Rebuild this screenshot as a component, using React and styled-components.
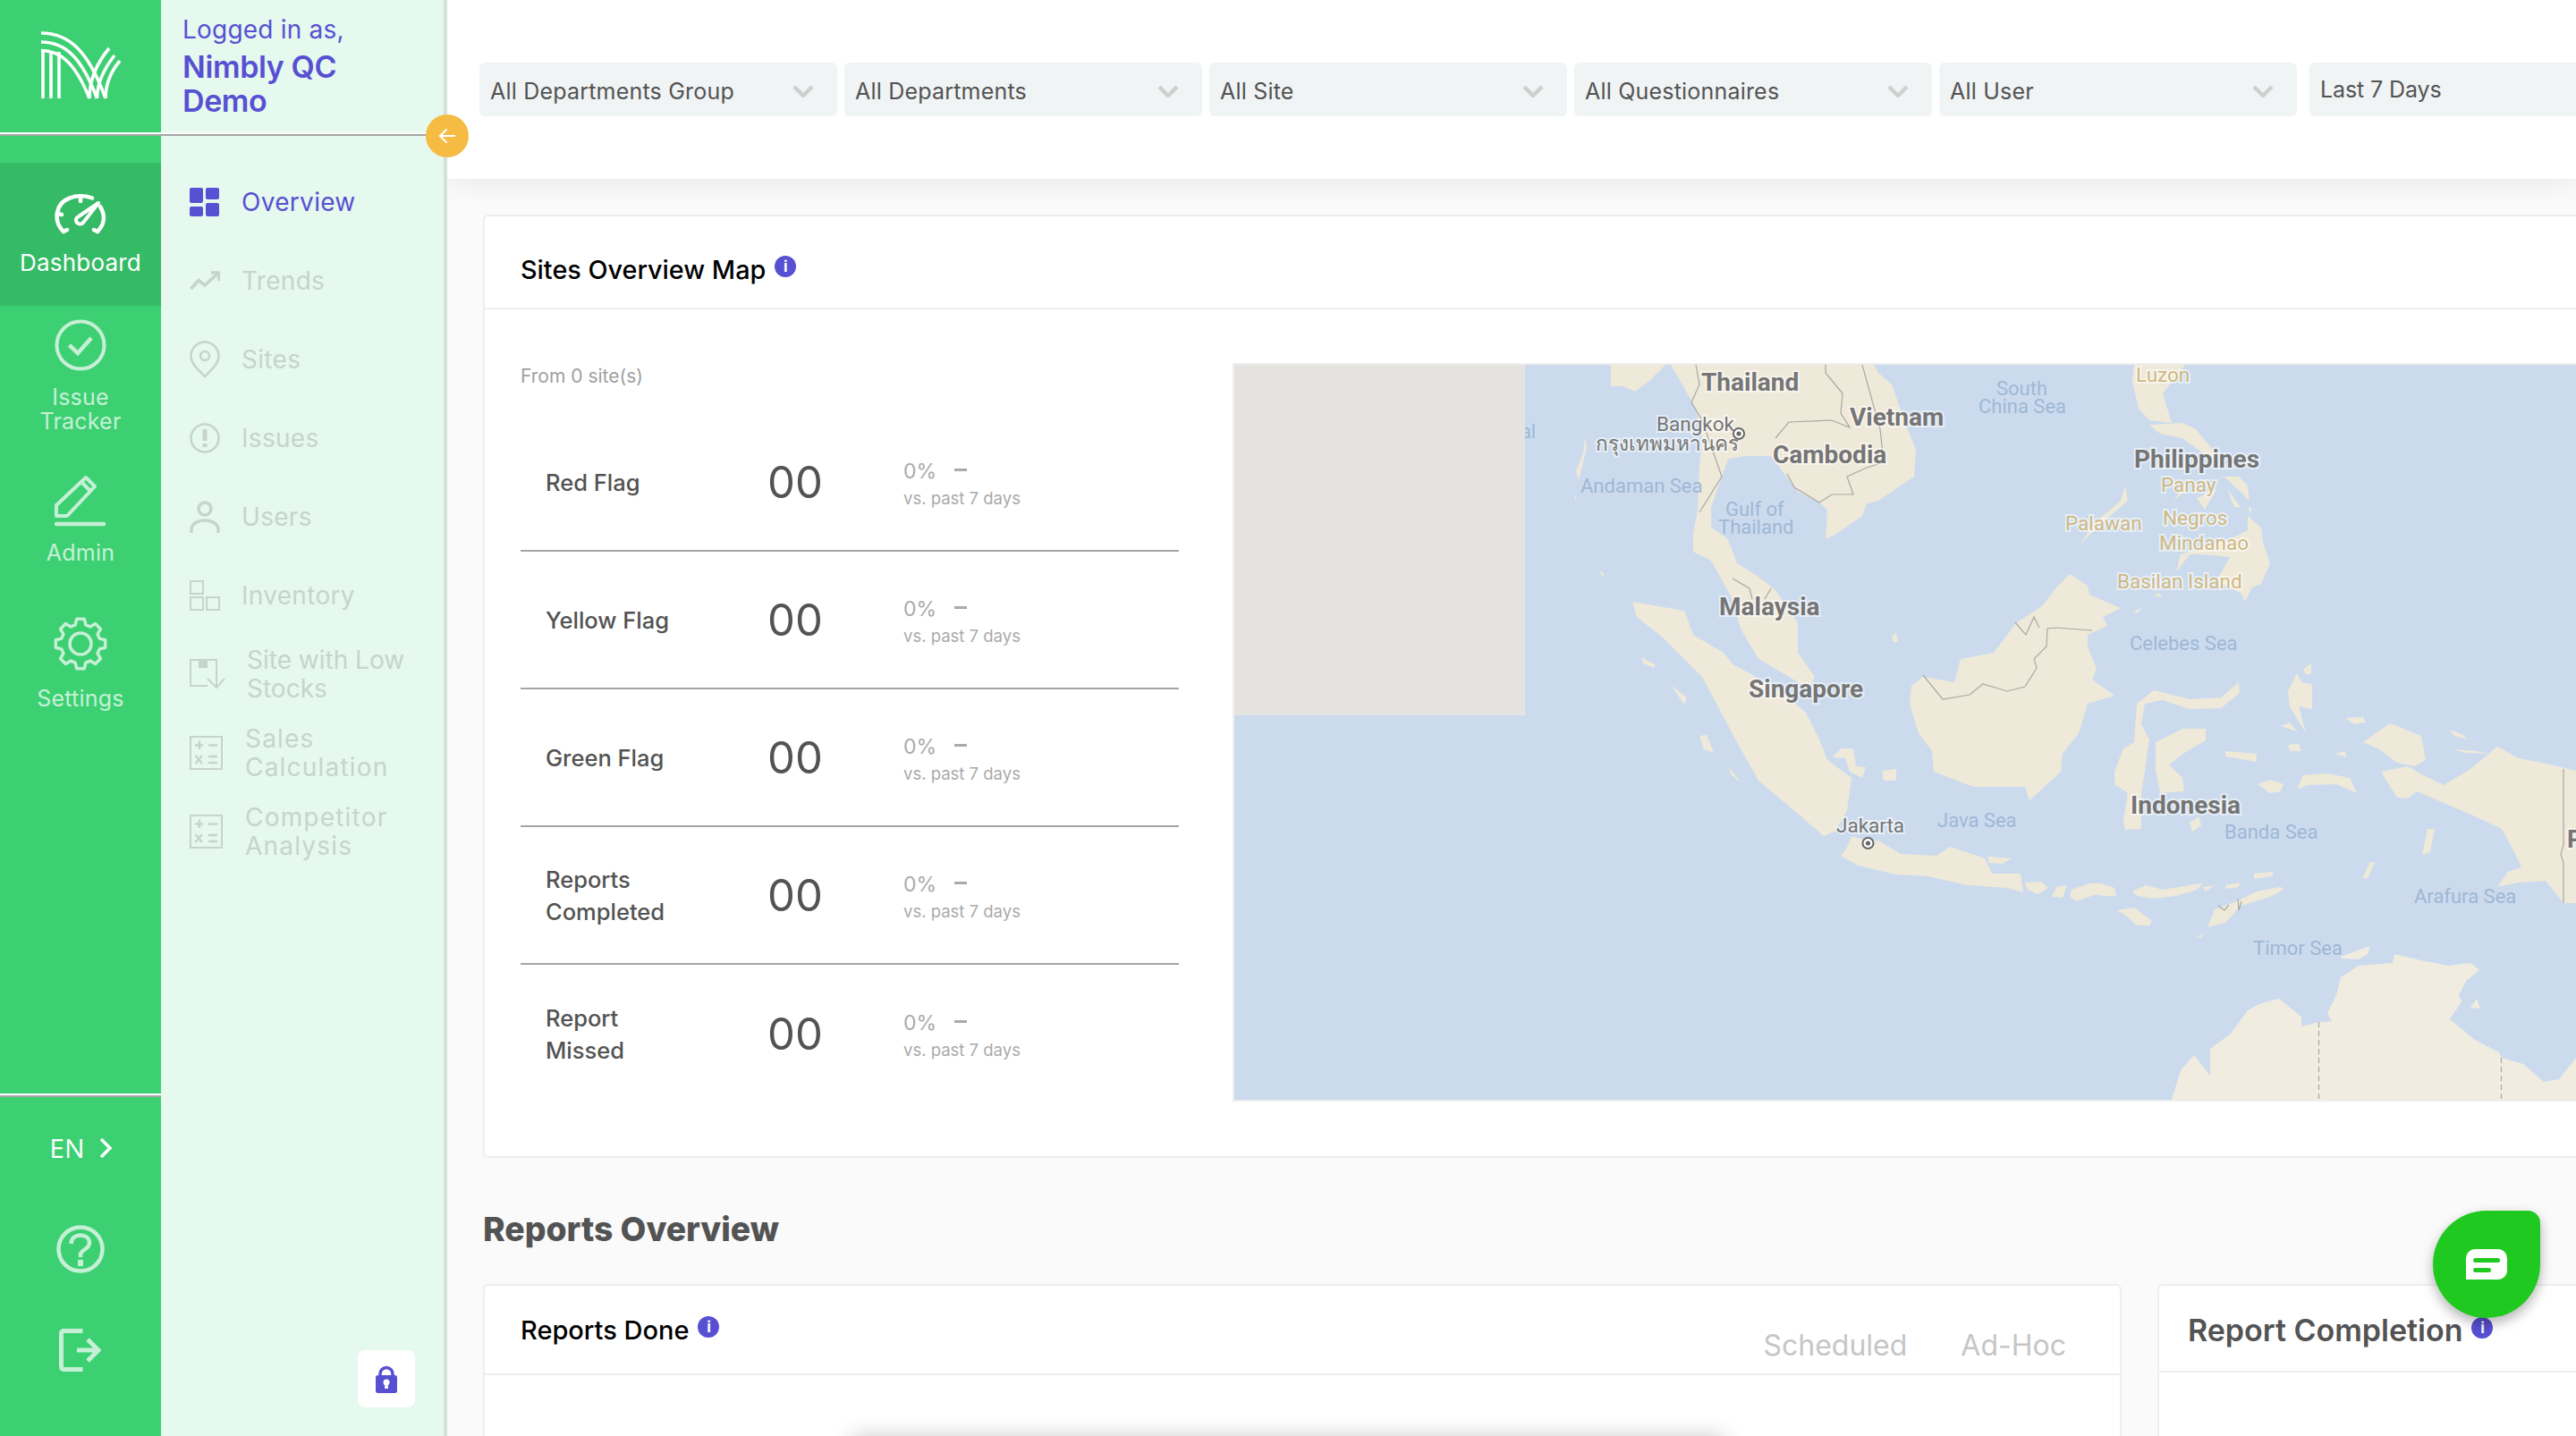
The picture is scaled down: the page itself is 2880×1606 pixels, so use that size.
import React from 'react';
import styled, { createGlobalStyle } from 'styled-components';

const GREEN = '#3CD072';
const PURPLE = '#5750D2';
const MUTED = '#C7D4CD';
const RAIL_ICON = '#C6F0D6';
const TEXT = '#535353';

const GlobalStyle = createGlobalStyle`
  html, body { margin: 0; padding: 0; background: #fafafa; }
  body { font-family: Inter, "Noto Sans", sans-serif; overflow: hidden; }
  * { box-sizing: border-box; }
`;

const Page = styled.div`
  position: relative;
  display: flex;
  width: 100vw;
  height: 100vh;
  overflow: hidden;
`;

const Rail = styled.aside`
  flex: 0 0 180px;
  display: flex;
  flex-direction: column;
  background: ${GREEN};
`;

const LogoBox = styled.div`
  height: 148px;
  display: flex;
  padding: 35px 0 0 46px;
`;

const Rule = styled.div`
  height: 4px;
  border-top: 2px solid #fff;
  border-bottom: 2px solid #a3a8a5;
  flex: none;
`;

const RailNav = styled.nav`
  margin-top: 30px;
  display: flex;
  flex-direction: column;
`;

const RailItem = styled.div`
  height: ${p => p.$height}px;
  padding-top: ${p => p.$top}px;
  display: flex;
  flex-direction: column;
  align-items: center;
  gap: ${p => p.$gap}px;
  background: ${p => (p.$active ? '#35BA66' : 'transparent')};
  color: ${p => (p.$active ? '#fff' : RAIL_ICON)};
  svg { display: block; flex: none; }
`;

const RailLabel = styled.span`
  font-size: ${p => (p.$active ? 26 : 25)}px;
  line-height: ${p => p.$line || 30}px;
  text-align: center;
  letter-spacing: 0.2px;
`;

const RailFoot = styled.div`
  margin-top: auto;
  padding-bottom: 40px;
`;

const FootRow = styled.div`
  height: 113px;
  display: flex;
  align-items: center;
  justify-content: center;
  gap: 16px;
  color: ${p => (p.$soft ? RAIL_ICON : '#fff')};
`;

const LangText = styled.span`
  font-family: "Open Sans", sans-serif;
  font-size: 30px;
`;

const Panel = styled.aside`
  flex: 0 0 320px;
  display: flex;
  flex-direction: column;
  background: #E5F9EE;
  border-right: 4px solid #D2E1D9;
`;

const Who = styled.div`
  height: 148px;
  padding: 14px 0 0 24px;
  color: ${PURPLE};
  font-size: 28px;
  line-height: 38px;
  letter-spacing: 0.2px;
`;

const WhoName = styled.div`
  margin-top: 4px;
  font-size: 34px;
  font-weight: 600;
  letter-spacing: -0.4px;
`;

const PanelNav = styled.nav`
  margin-top: 30px;
  display: flex;
  flex-direction: column;
`;

const PanelItem = styled.div`
  height: 88px;
  padding-left: 32px;
  display: flex;
  align-items: center;
  color: ${p => (p.$active ? PURPLE : MUTED)};
`;

const PanelIcon = styled.span`
  flex: 0 0 40px;
  display: flex;
`;

const PanelText = styled.span`
  margin-left: ${p => p.$indent || 18}px;
  font-size: 28px;
  line-height: 32px;
  letter-spacing: ${p => p.$spacing ?? 0.3}px;
`;

const LockButton = styled.div`
  margin: auto 32px 32px 0;
  align-self: flex-end;
  width: 64px;
  height: 64px;
  background: #fff;
  border-radius: 8px;
  display: flex;
  align-items: center;
  justify-content: center;
`;

const Toggle = styled.div`
  position: absolute;
  z-index: 3;
  left: 476px;
  top: 128px;
  width: 48px;
  height: 48px;
  border-radius: 50%;
  background: #F6BB43;
  display: flex;
  align-items: center;
  justify-content: center;
`;

const Main = styled.main`
  flex: 1;
  min-width: 0;
  display: flex;
  flex-direction: column;
  overflow: hidden;
  background: #fafafa;
`;

const FilterBar = styled.div`
  flex: none;
  height: 200px;
  padding: 70px 0 0 36px;
  display: flex;
  align-items: flex-start;
  gap: 8px;
  background: #fff;
  box-shadow: 0 0 34px rgba(0, 0, 0, 0.09);
  position: relative;
`;

const Select = styled.div`
  flex: 0 0 400px;
  height: 60px;
  padding: 3px 26px 0 12px;
  display: flex;
  align-items: center;
  justify-content: space-between;
  background: #F1F4F5;
  border-radius: 6px;
  font-size: 25px;
  color: ${TEXT};
  letter-spacing: 0.2px;
`;

const DateRange = styled(Select)`
  margin-left: 6px;
  padding-top: 0;
  padding-left: 12px;
  letter-spacing: -0.1px;
`;

const Content = styled.div`
  padding: 40px 0 0 40px;
  display: flex;
  flex-direction: column;
`;

const Card = styled.section`
  flex: none;
  width: ${p => p.$width}px;
  background: #fff;
  border: 2px solid #eeeeee;
  border-radius: 6px;
`;

const CardHead = styled.header`
  height: ${p => p.$height}px;
  padding: ${p => p.$drop || 0}px ${p => p.$right || 0}px 0 ${p => p.$left || 40}px;
  display: flex;
  align-items: center;
  border-bottom: 2px solid #eeeeee;
`;

const CardTitle = styled.h3`
  margin: 0;
  font-size: ${p => p.$size || 29}px;
  font-weight: ${p => p.$weight || 500};
  color: ${p => p.$color || '#000'};
`;

const Info = styled.span`
  width: 24px;
  height: 24px;
  margin: -6px 0 0 10px;
  border-radius: 50%;
  background: ${PURPLE};
  color: #fff;
  font-size: 17px;
  font-weight: 700;
  line-height: 24px;
  text-align: center;
`;

const MapBody = styled.div`
  display: flex;
  gap: 60px;
  padding: 60px 0 60px 40px;
`;

const Stats = styled.div`
  flex: 0 0 736px;
`;

const FromText = styled.div`
  height: 57px;
  padding-top: 1px;
  font-size: 21px;
  line-height: 28px;
  color: #a0a0a0;
`;

const StatRow = styled.div`
  height: 154px;
  padding-left: 28px;
  display: flex;
  align-items: center;
  border-bottom: ${p => (p.$last ? 'none' : '2px solid #a3a6a8')};
`;

const StatLabel = styled.div`
  flex: 0 0 248px;
  padding-top: 2px;
  font-size: 25.5px;
  line-height: 36px;
  font-weight: 500;
  color: ${TEXT};
`;

const StatValue = styled.div`
  flex: 0 0 152px;
  font-size: 49px;
  color: ${TEXT};
`;

const StatTrend = styled.div`
  color: #aaaaaa;
  margin-top: 2px;
`;

const TrendTop = styled.div`
  display: flex;
  align-items: center;
  gap: 20px;
  font-size: 23px;
  line-height: 30px;
`;

const TrendDash = styled.span`
  width: 14px;
  height: 3px;
  margin-top: -3px;
  background: #aaaaaa;
`;

const TrendNote = styled.div`
  margin-top: 3px;
  font-size: 18.5px;
  line-height: 24px;
`;

const MapFrame = styled.div`
  flex: none;
  width: 1540px;
  height: 826px;
  border: 2px solid #eeeeee;
  background: #CBDBED;
  svg { display: block; }
`;

const SectionTitle = styled.h2`
  margin: 56px 0 0;
  height: 85px;
  font-size: 37.3px;
  line-height: 48px;
  font-weight: 800;
  color: ${TEXT};
`;

const ReportRow = styled.div`
  display: flex;
  gap: 40px;
`;

const Tabs = styled.div`
  margin-left: auto;
  display: flex;
  gap: 60px;
  padding-top: 34px;
  font-size: 32px;
  color: #c6c6c6;
`;

const ChartShadow = styled.div`
  width: 976px;
  height: 60px;
  margin: 68px 0 0 410px;
  background: #fff;
  box-shadow: 0 0 24px rgba(0, 0, 0, 0.2);
`;

const ChatButton = styled.div`
  position: absolute;
  z-index: 3;
  left: 2720px;
  top: 1354px;
  width: 120px;
  height: 120px;
  border-radius: 60px 14px 60px 60px;
  background: #1FC91F;
  box-shadow: 0 6px 14px rgba(0, 0, 0, 0.3);
  display: flex;
  align-items: center;
  justify-content: center;
`;

const LandShape = styled.polygon`
  fill: ${p => (p.$pale ? '#F1ECE0' : '#EFE9D9')};
`;

const Border = styled.polyline`
  fill: none;
  stroke: #a8a8a4;
  stroke-width: 1.2;
  stroke-dasharray: ${p => (p.$dashed ? '6 4' : 'none')};
`;

const labelColors = { country: '#757575', city: '#757575', sea: '#9FB7D5', island: '#CFB882' };
const labelSizes = { country: 28, city: 22.5, sea: 22, island: 22.5 };

const MapLabel = styled.text`
  font-family: Roboto, "Noto Sans", sans-serif;
  font-size: ${p => labelSizes[p.$kind]}px;
  font-weight: ${p => (p.$kind === 'country' ? 700 : 400)};
  fill: ${p => labelColors[p.$kind]};
  paint-order: stroke;
  stroke: ${p => (p.$kind === 'sea' ? 'none' : 'rgba(255,255,255,0.55)')};
  stroke-width: 4px;
`;

const land = [
  '1801,408 1862,408 1845,425 1828,438 1815,432 1801,432',
  '1868,408 2095,408 2100,417 2115,430 2130,473 2142,503 2140,533 2100,560 2087,563 2082,577 2053,597 2041,603 2043,570 2034,562 2010,550 2000,537 1980,510 1951,510 1932,513 1925,533 1913,567 1913,590 1932,603 1942,630 1966,645 1985,660 2010,697 2010,730 2029,757 2022,770 2000,757 1966,737 1946,703 1937,670 1913,627 1893,617 1893,597 1898,570 1900,523 1903,490 1896,457 1881,430',
  '1825,673 1883,683 1893,710 1927,730 1937,743 1956,753 1990,773 2019,797 2034,827 2043,850 2070,870 2065,907 2051,930 2039,935 2010,910 1966,873 1942,830 1903,757 1859,713 1830,690',
  '2070,935 2087,940 2100,940 2125,955 2165,957 2180,947 2219,960 2227,977 2259,977 2262,998 2244,993 2200,990 2155,980 2120,978 2077,968 2058,957 2065,948',
  '2222,958 2249,960 2239,966 2224,965',
  '2264,987 2282,986 2290,993 2278,1000 2267,995',
  '2299,992 2311,990 2306,1004 2294,1003',
  '2316,995 2336,988 2349,988 2364,993 2366,1002 2351,1002 2344,1000 2321,1008 2314,1002',
  '2384,997 2399,990 2418,995 2448,990 2463,988 2456,995 2433,1002 2408,1005 2389,1002',
  '2366,1018 2386,1015 2406,1030 2403,1035 2389,1035 2376,1023',
  '2468,1037 2476,1017 2503,1007 2523,997 2550,992 2553,995 2538,1003 2505,1013 2488,1032',
  '2463,992 2476,990 2466,997',
  '2488,990 2504,987 2503,992 2488,994',
  '2520,977 2542,975 2540,980 2520,983',
  '2454,1050 2466,1042 2461,1048',
  '2314,642 2334,655 2336,665 2371,680 2351,690 2356,700 2334,710 2334,723 2344,748 2339,760 2364,778 2334,787 2324,820 2306,843 2304,863 2269,895 2264,880 2207,880 2180,870 2162,863 2160,840 2145,820 2135,787 2137,767 2150,757 2185,763 2192,737 2229,730 2254,697 2284,677 2299,657',
  '2386,830 2389,787 2408,772 2448,782 2483,780 2503,763 2504,775 2483,792 2448,793 2418,783 2398,787 2394,810 2403,827 2401,840 2398,862 2394,887 2394,927 2376,928 2374,917 2379,887 2364,877 2364,863 2374,837',
  '2410,830 2440,815 2466,815 2466,828 2445,840 2425,855 2440,870 2442,885 2415,887 2410,860',
  '2448,920 2458,913 2461,923 2451,930',
  '2575,748 2584,742 2584,753 2578,755',
  '2558,773 2568,753 2573,763 2585,765 2585,793 2570,790 2578,820 2560,790',
  '2550,812 2560,808 2568,818',
  '2662,863 2692,857 2709,867 2732,878 2762,860 2792,835 2816,848 2851,855 2880,862 2880,1010 2866,1010 2846,985 2816,987 2792,992 2804,975 2819,970 2811,953 2797,927 2767,913 2737,900 2702,885 2692,893 2680,892',
  '2568,883 2575,867 2602,865 2627,870 2635,887 2612,877 2580,878',
  '2524,877 2538,872 2553,877 2550,885 2538,887',
  '2488,840 2523,843 2523,852 2488,846',
  '2558,833 2570,832 2573,840 2560,840',
  '2611,843 2622,840 2623,847',
  '2714,927 2722,927 2717,953 2708,956',
  '2650,964 2655,965 2647,982 2641,983',
  '2622,803 2642,802 2645,808 2632,810',
  '2642,830 2672,809 2707,823 2712,850 2700,857 2680,853 2660,838',
  '2739,816 2754,822 2759,827 2744,823',
  '2742,838 2769,840 2782,843 2757,842',
  '2058,837 2072,837 2075,857 2086,858 2082,870 2068,863 2063,848 2049,847',
  '2104,862 2120,860 2120,873 2106,873',
  '2386,408 2443,408 2418,440 2428,473 2403,470 2391,457 2384,427',
  '2403,475 2440,473 2455,480 2480,510 2470,512 2440,490 2415,485',
  '2486,533 2503,533 2513,543 2515,560 2503,548',
  '2490,547 2505,567 2498,567',
  '2456,557 2478,547 2465,570',
  '2430,560 2448,535 2440,552',
  '2513,567 2517,568 2517,576',
  '2513,577 2528,590 2530,607 2538,630 2528,653 2518,657 2510,673 2505,663 2478,650 2493,623 2463,620 2448,620 2433,640 2438,620 2468,610 2493,603 2513,593',
  '2376,543 2379,560 2359,577 2324,610 2344,583 2371,560',
  '2413,663 2418,667 2408,667',
  '2384,685 2394,680 2391,685',
  '2115,712 2120,707 2122,718 2117,718',
  '1772,490 1774,500 1765,537 1762,527 1770,507',
  '1760,553 1763,558 1761,560',
  '1789,638 1794,643 1790,644',
  '1835,735 1850,743 1850,747 1837,742',
  '1869,767 1886,780 1883,788',
  '1900,823 1908,822 1916,842 1905,838',
  '1932,857 1944,872 1945,874 1935,866'
];

const australia = '2428,1230 2438,1197 2453,1180 2471,1203 2471,1173 2493,1157 2513,1130 2528,1122 2548,1117 2573,1137 2573,1148 2593,1143 2607,1142 2612,1153 2602,1133 2612,1113 2617,1093 2637,1080 2675,1077 2677,1067 2702,1073 2737,1080 2762,1077 2772,1085 2757,1097 2749,1113 2752,1120 2739,1140 2767,1163 2794,1177 2797,1183 2821,1190 2844,1210 2861,1207 2880,1183 2880,1230';

const borders = [
  '1896,408 1900,430 1891,450 1903,470 1925,533 1900,573',
  '1937,647 1956,658 1959,670',
  '1980,658 1973,670',
  '1985,490 2000,472 2048,470 2068,478 2058,462 2060,440 2041,417 2041,408',
  '1998,530 2006,545 2034,562 2048,553 2072,553 2065,533 2087,523 2106,517 2102,480 2082,408',
  '2150,755 2172,782 2202,777 2217,765 2244,773 2264,768 2277,747 2274,737 2288,723 2289,703 2299,702 2339,705',
  '2253,696 2265,710 2274,690 2280,702',
  '2866,860 2866,945 2863,955 2866,965 2866,1010',
  '2480,1013 2487,1018 2492,1012',
  '2502,1005 2503,1018 2506,1008'
];

const labels = [
  ['country', 1902, 437, 'Thailand'],
  ['city', 1852, 482, 'Bangkok'],
  ['city', 1784, 504, 'กรุงเทพมหานคร'],
  ['country', 1982, 518, 'Cambodia'],
  ['country', 2068, 476, 'Vietnam'],
  ['sea', 1767, 551, 'Andaman Sea'],
  ['sea', 1650, 490, 'Bengal'],
  ['sea', 1929, 577, 'Gulf of'],
  ['sea', 1921, 597, 'Thailand'],
  ['country', 1922, 688, 'Malaysia'],
  ['country', 1955, 780, 'Singapore'],
  ['sea', 2232, 442, 'South'],
  ['sea', 2212, 462, 'China Sea'],
  ['island', 2388, 427, 'Luzon'],
  ['country', 2386, 523, 'Philippines'],
  ['island', 2416, 550, 'Panay'],
  ['island', 2418, 587, 'Negros'],
  ['island', 2414, 615, 'Mindanao'],
  ['island', 2309, 593, 'Palawan'],
  ['island', 2367, 658, 'Basilan Island'],
  ['sea', 2381, 727, 'Celebes Sea'],
  ['city', 2053, 931, 'Jakarta'],
  ['sea', 2166, 925, 'Java Sea'],
  ['country', 2382, 910, 'Indonesia'],
  ['sea', 2487, 938, 'Banda Sea'],
  ['sea', 2699, 1010, 'Arafura Sea'],
  ['sea', 2519, 1068, 'Timor Sea'],
  ['country', 2870, 948, 'Papua']
];

function CityDot({ x, y }) {
  return (
    <g>
      <circle cx={x} cy={y} r="6" fill="#fff" stroke="#666" strokeWidth="2" />
      <circle cx={x} cy={y} r="2.6" fill="#666" />
    </g>
  );
}

function MapArt() {
  return (
    <svg width="1536" height="822" viewBox="1380 408 1536 822">
      <rect x="1380" y="408" width="1536" height="822" fill="#CBDBED" />
      {land.map(points => <LandShape key={points} points={points} />)}
      <LandShape $pale points={australia} />
      <LandShape $pale points="2617,1070 2650,1058 2647,1067 2637,1073 2617,1072" />
      <LandShape $pale points="2762,1127 2769,1117 2773,1128" />
      {borders.map(points => <Border key={points} points={points} />)}
      <Border $dashed points="2592.5,1143 2592.5,1230" />
      <Border $dashed points="2796.5,1183 2796.5,1230" />
      {labels.map(([kind, x, y, text]) => (
        <MapLabel key={text + x} $kind={kind} x={x} y={y}>{text}</MapLabel>
      ))}
      <CityDot x={1944} y={485} />
      <CityDot x={2088.5} y={943} />
      <rect x="1380" y="408" width="325" height="392" fill="#E4E3DF" />
    </svg>
  );
}

function Logo() {
  return (
    <svg width="90" height="76" viewBox="46 35 90 76" fill="none" stroke="#fff" strokeWidth="3.6">
      <path d="M46 37C78 37 99 58 118 110" />
      <path d="M46 47C73 47 91 64 108.5 110" />
      <path d="M46 56.5C67 56.5 84 70 100 110" />
      <path d="M48 56V110M57 57V110M66 58V110" />
      <path d="M100 110C100 90 107 72 122 54" />
      <path d="M108.5 110C108.5 92 117 76 128 62" />
      <path d="M118 110C118 94 124 80 134 68" />
    </svg>
  );
}

function GaugeIcon() {
  return (
    <svg width="60" height="46" viewBox="60 216 60 46" fill="none" stroke="currentColor" strokeWidth="4.5" strokeLinecap="round">
      <path d="M71 258C59 246 62 226 78 220.5C85 217.5 95 217.5 103 220.5" />
      <path d="M112 230C118 240 117 250 109 258" />
      <path d="M64 238L69 239M90 218V224M71 258L75 256M109 258L105 256" />
      <path d="M110 226L93 248C90 251 85 249 85 245C85 243 86 242 88 241Z" strokeLinejoin="round" strokeWidth="4" />
    </svg>
  );
}

function CheckIcon() {
  return (
    <svg width="58" height="58" viewBox="0 0 58 58" fill="none" stroke="currentColor" strokeWidth="4">
      <circle cx="29" cy="29" r="26.5" />
      <path d="M16.5 29L26 38L41 21" strokeWidth="4.5" />
    </svg>
  );
}

function PencilIcon() {
  return (
    <svg width="58" height="57" viewBox="0 0 58 57" fill="none" stroke="currentColor" strokeWidth="4">
      <path d="M2 33L35 2L45 12L14 45H2Z" strokeLinejoin="round" />
      <path d="M30 7L40 17" />
      <path d="M2 54H55" strokeWidth="4.5" strokeLinecap="round" />
    </svg>
  );
}

// eight round-shouldered teeth, worked out rather than typed by hand
function gearPoints() {
  const points = [];
  for (let i = 0; i < 8; i++) {
    const mid = (i * Math.PI) / 4 - Math.PI / 2;
    [[-0.27, 22], [-0.15, 28], [0.15, 28], [0.27, 22]].forEach(([offset, radius]) => {
      const x = 30 + radius * Math.cos(mid + offset);
      const y = 30 + radius * Math.sin(mid + offset);
      points.push(`${x.toFixed(1)},${y.toFixed(1)}`);
    });
  }
  return points.join(' ');
}

function GearIcon() {
  return (
    <svg width="60" height="60" viewBox="0 0 60 60" fill="none" stroke="currentColor" strokeWidth="3.5" strokeLinejoin="round">
      <polygon points={gearPoints()} />
      <circle cx="30" cy="30" r="12" />
    </svg>
  );
}

function HelpIcon() {
  return (
    <svg width="54" height="56" viewBox="0 0 54 56" fill="none" stroke="currentColor" strokeWidth="4.5">
      <circle cx="27" cy="28" r="24.5" />
      <path d="M16.5 22C17 15 22 12.5 27 12.5C33 12.5 37 16 37 21C37 27 30 28 27 33V37" />
      <path d="M27 40V47" strokeWidth="6" />
    </svg>
  );
}

function LogoutIcon() {
  return (
    <svg width="48" height="48" viewBox="0 0 48 48" fill="none" stroke="currentColor" strokeWidth="5">
      <path d="M26.5 2.5H5A2.5 2.5 0 0 0 2.5 5V43A2.5 2.5 0 0 0 5 45.5H26.5" />
      <path d="M20 24H44M32 12L44 24L32 36" />
    </svg>
  );
}

function OverviewIcon() {
  return (
    <svg width="33" height="32" viewBox="0 0 33 32" fill={PURPLE}>
      <rect width="15" height="17" rx="2" />
      <rect x="18" width="15" height="13" rx="2" />
      <rect y="21" width="15" height="11" rx="2" />
      <rect x="18" y="17" width="15" height="15" rx="2" />
    </svg>
  );
}

const muted = { fill: 'none', stroke: 'currentColor', strokeWidth: 2.5 };

function TrendsIcon() {
  return (
    <svg width="34" height="22" viewBox="0 0 34 22" {...muted} strokeWidth="3.5">
      <path d="M1.5 20L10 10.5L17 16L32 2.5" />
      <path d="M24 2H33V11" />
    </svg>
  );
}

function PinIcon() {
  return (
    <svg width="34" height="42" viewBox="0 0 34 42" {...muted}>
      <path d="M17 40C10 33 1.5 26 1.5 17A15.5 15.5 0 0 1 32.5 17C32.5 26 24 33 17 40Z" />
      <circle cx="17" cy="17" r="5" />
    </svg>
  );
}

function IssueIcon() {
  return (
    <svg width="34" height="34" viewBox="0 0 34 34" {...muted}>
      <circle cx="17" cy="17" r="15.5" />
      <path d="M17 7V20" strokeWidth="5" />
      <path d="M17 23V27" strokeWidth="5" />
    </svg>
  );
}

function UserIcon() {
  return (
    <svg width="34" height="36" viewBox="0 0 34 36" {...muted} strokeWidth="3.5">
      <circle cx="17" cy="9" r="7" />
      <path d="M2 36V32C2 26 9 22 17 22C25 22 32 26 32 32V36" />
    </svg>
  );
}

function InventoryIcon() {
  return (
    <svg width="34" height="34" viewBox="0 0 34 34" {...muted} strokeWidth="2">
      <rect x="1" y="1" width="14" height="14" />
      <rect x="1" y="19" width="14" height="14" />
      <rect x="19" y="19" width="14" height="14" />
    </svg>
  );
}

function LowStockIcon() {
  return (
    <svg width="40" height="34" viewBox="0 0 40 34" {...muted} strokeWidth="2">
      <path d="M30 15V1H1V30H20" />
      <rect x="11" y="1" width="8" height="8" fill="currentColor" />
      <path d="M30 12V32M20 22L30 32L39 22" />
    </svg>
  );
}

function CalcIcon() {
  return (
    <svg width="37" height="38" viewBox="0 0 37 38" {...muted} strokeWidth="2">
      <rect x="1" y="1" width="35" height="36" />
      <path d="M11 5.5V15M6 10.5H15M21 10.5H31M6.5 22L14 31M14 22L6.5 31M21 23H31M21 30H31" strokeWidth="2.5" />
    </svg>
  );
}

function Chevron() {
  return (
    <svg width="24" height="14" viewBox="0 0 24 14" fill="none" stroke="#CFCFCF" strokeWidth="4.5">
      <path d="M2 2L12 12L22 2" />
    </svg>
  );
}

const railItems = [
  { label: 'Dashboard', icon: <GaugeIcon />, height: 160, top: 35, gap: 16, active: true },
  { label: <>Issue<br />Tracker</>, icon: <CheckIcon />, height: 158, top: 15, gap: 16, line: 27 },
  { label: 'Admin', icon: <PencilIcon />, height: 150, top: 32, gap: 14 },
  { label: 'Settings', icon: <GearIcon />, height: 150, top: 40, gap: 16 }
];

const panelItems = [
  { label: 'Overview', icon: <OverviewIcon />, active: true },
  { label: 'Trends', icon: <TrendsIcon /> },
  { label: 'Sites', icon: <PinIcon /> },
  { label: 'Issues', icon: <IssueIcon /> },
  { label: 'Users', icon: <UserIcon /> },
  { label: 'Inventory', icon: <InventoryIcon /> },
  { label: <>Site with Low<br />Stocks</>, icon: <LowStockIcon />, indent: 24, spacing: 0 },
  { label: <>Sales<br />Calculation</>, icon: <CalcIcon />, indent: 22, spacing: 1.2 },
  { label: <>Competitor<br />Analysis</>, icon: <CalcIcon />, indent: 22, spacing: 1.2 }
];

const filters = ['All Departments Group', 'All Departments', 'All Site', 'All Questionnaires', 'All User'];

const stats = [
  'Red Flag',
  'Yellow Flag',
  'Green Flag',
  <>Reports<br />Completed</>,
  <>Report<br />Missed</>
];

export default function App() {
  return (
    <Page>
      <GlobalStyle />
      <Rail>
        <LogoBox><Logo /></LogoBox>
        <Rule />
        <RailNav>
          {railItems.map((item, i) => (
            <RailItem key={i} $active={item.active} $height={item.height} $top={item.top} $gap={item.gap}>
              {item.icon}
              <RailLabel $active={item.active} $line={item.line}>{item.label}</RailLabel>
            </RailItem>
          ))}
        </RailNav>
        <RailFoot>
          <Rule />
          <FootRow>
            <LangText>EN</LangText>
            <svg width="14" height="24" viewBox="0 0 14 24" fill="none" stroke="#fff" strokeWidth="3.5"><path d="M2 2L12 12L2 22" /></svg>
          </FootRow>
          <FootRow $soft><HelpIcon /></FootRow>
          <FootRow $soft><LogoutIcon /></FootRow>
        </RailFoot>
      </Rail>

      <Panel>
        <Who>
          Logged in as,
          <WhoName>Nimbly QC<br />Demo</WhoName>
        </Who>
        <Rule />
        <PanelNav>
          {panelItems.map((item, i) => (
            <PanelItem key={i} $active={item.active}>
              <PanelIcon>{item.icon}</PanelIcon>
              <PanelText $indent={item.indent} $spacing={item.spacing}>{item.label}</PanelText>
            </PanelItem>
          ))}
        </PanelNav>
        <LockButton>
          <svg width="24" height="32" viewBox="0 0 24 32">
            <path d="M5 14V10.5A7 7 0 0 1 19 10.5V14" fill="none" stroke={PURPLE} strokeWidth="3.5" />
            <rect y="12" width="24" height="20" rx="2.5" fill={PURPLE} />
            <circle cx="12" cy="20" r="3.5" fill="#fff" />
            <path d="M10.5 21H13.5L14 27H10Z" fill="#fff" />
          </svg>
        </LockButton>
      </Panel>

      <Toggle>
        <svg width="20" height="18" viewBox="0 0 20 18" fill="none" stroke="#fff" strokeWidth="2.2">
          <path d="M19 9H2M9.5 1.5L2 9L9.5 16.5" />
        </svg>
      </Toggle>

      <Main>
        <FilterBar>
          {filters.map(name => (
            <Select key={name}>{name}<Chevron /></Select>
          ))}
          <DateRange>Last 7 Days</DateRange>
        </FilterBar>

        <Content>
          <Card $width={2600}>
            <CardHead $height={104} $drop={16}>
              <CardTitle $size={28.8}>Sites Overview Map</CardTitle>
              <Info>i</Info>
            </CardHead>
            <MapBody>
              <Stats>
                <FromText>From 0 site(s)</FromText>
                {stats.map((label, i) => (
                  <StatRow key={i} $last={i === stats.length - 1}>
                    <StatLabel>{label}</StatLabel>
                    <StatValue>00</StatValue>
                    <StatTrend>
                      <TrendTop>0%<TrendDash /></TrendTop>
                      <TrendNote>vs. past 7 days</TrendNote>
                    </StatTrend>
                  </StatRow>
                ))}
              </Stats>
              <MapFrame><MapArt /></MapFrame>
            </MapBody>
          </Card>

          <SectionTitle>Reports Overview</SectionTitle>

          <ReportRow>
            <Card $width={1832}>
              <CardHead $height={100} $right={60}>
                <CardTitle>Reports Done</CardTitle>
                <Info>i</Info>
                <Tabs><span>Scheduled</span><span>Ad-Hoc</span></Tabs>
              </CardHead>
              <ChartShadow />
            </Card>
            <Card $width={700}>
              <CardHead $height={97} $left={32} $drop={4}>
                <CardTitle $size={34} $weight={600} $color={TEXT}>Report Completion</CardTitle>
                <Info>i</Info>
              </CardHead>
            </Card>
          </ReportRow>
        </Content>
      </Main>

      <ChatButton>
        <svg width="46" height="34" viewBox="0 0 46 34">
          <path d="M10 0H36A10 10 0 0 1 46 10V24A10 10 0 0 1 36 34H0V10A10 10 0 0 1 10 0Z" fill="#fff" />
          <rect x="8" y="10" width="30" height="5" rx="2.5" fill="#1FC91F" />
          <rect x="8" y="21" width="20" height="5" rx="2.5" fill="#1FC91F" />
        </svg>
      </ChatButton>
    </Page>
  );
}
